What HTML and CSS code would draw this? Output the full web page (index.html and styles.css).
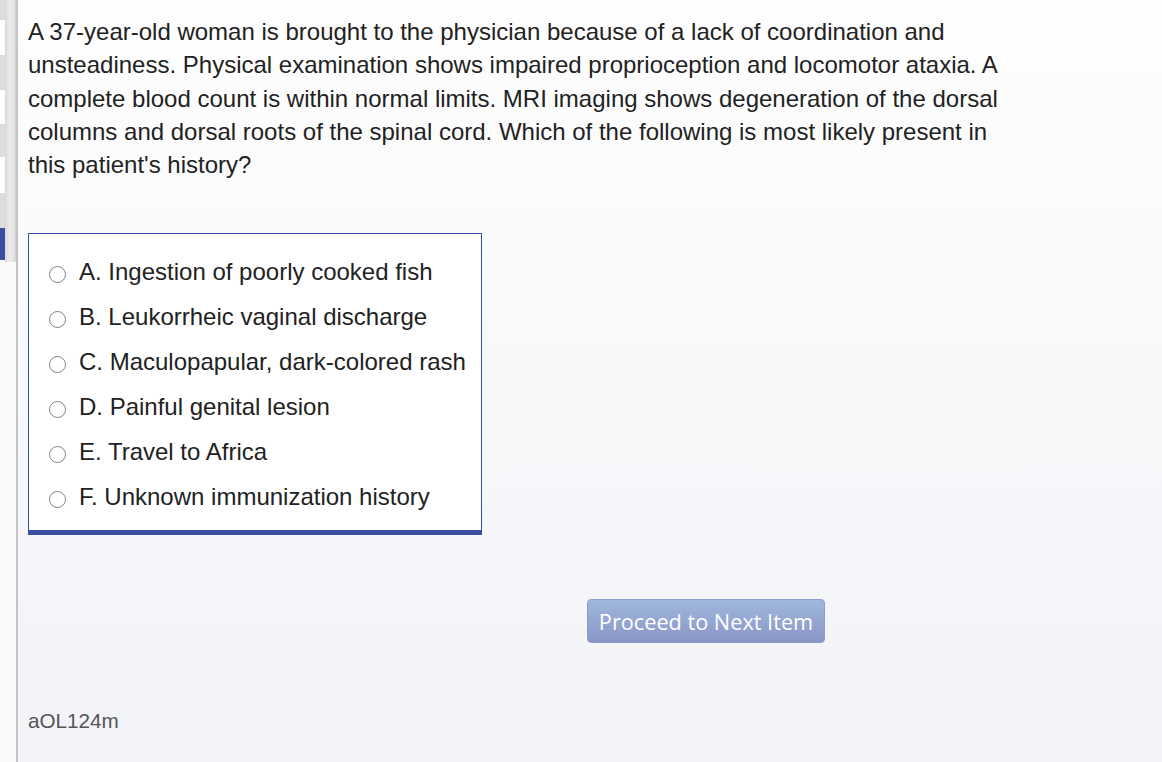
FILE: index.html
```html
<!DOCTYPE html>
<html>
<head>
<meta charset="utf-8">
<link rel="stylesheet" href="styles.css">
</head>
<body>
<div class="app">
  <aside class="sidebar">
    <div class="rows">
      <div class="row gray h20"></div>
      <div class="row white h35"></div>
      <div class="row gray h35"></div>
      <div class="row white h34"></div>
      <div class="row gray h33"></div>
      <div class="row white h36"></div>
      <div class="row gray h35"></div>
      <div class="row active h32"></div>
    </div>
    <div class="scrollbar"></div>
  </aside>
  <main class="main">
    <p class="question">A 37-year-old woman is brought to the physician because of a lack of coordination and unsteadiness. Physical examination shows impaired proprioception and locomotor ataxia. A complete blood count is within normal limits. MRI imaging shows degeneration of the dorsal columns and dorsal roots of the spinal cord. Which of the following is most likely present in this patient's history?</p>
    <div class="answers">
      <label class="option"><span class="radio"></span><span class="opt-text">A. Ingestion of poorly cooked fish</span></label>
      <label class="option"><span class="radio"></span><span class="opt-text">B. Leukorrheic vaginal discharge</span></label>
      <label class="option"><span class="radio"></span><span class="opt-text">C. Maculopapular, dark-colored rash</span></label>
      <label class="option"><span class="radio"></span><span class="opt-text">D. Painful genital lesion</span></label>
      <label class="option"><span class="radio"></span><span class="opt-text">E. Travel to Africa</span></label>
      <label class="option"><span class="radio"></span><span class="opt-text">F. Unknown immunization history</span></label>
    </div>
    <div class="actions">
      <button class="next-btn">Proceed to Next Item</button>
    </div>
    <div class="item-id">aOL124m</div>
  </main>
</div>
</body>
</html>
```
FILE: styles.css
```css
html, body {
  margin: 0;
  padding: 0;
  height: 100%;
}
body {
  font-family: "Liberation Sans", Arial, sans-serif;
  color: #222;
  overflow: hidden;
}
.app {
  display: flex;
  height: 762px;
}
.sidebar {
  width: 16px;
  flex: none;
  display: flex;
  background: #fafafa;
  border-right: 2px solid #c4c4c4;
  box-sizing: content-box;
}
.rows {
  width: 5px;
  display: flex;
  flex-direction: column;
}
.row { width: 5px; }
.gray { background: #dcdcdc; }
.white { background: #ffffff; }
.active { background: #3a4da0; }
.h20 { height: 20px; }
.h32 { height: 32px; }
.h33 { height: 33px; }
.h34 { height: 34px; }
.h35 { height: 35px; }
.h36 { height: 36px; }
.scrollbar {
  width: 11px;
  height: 262px;
  background: linear-gradient(to right, #d8d8d8, #ececec 40%, #e4e4e4 80%, #d0d0d0);
}
.main {
  flex: 1;
  background: linear-gradient(to bottom, #fefefe 0%, #f2f3f7 100%);
  padding: 15px 0 0 10px;
  display: flex;
  flex-direction: column;
}
.question {
  margin: 0;
  width: 980px;
  font-size: 24px;
  line-height: 33.3px;
  color: #222;
}
.answers {
  margin-top: 52px;
  width: 452px;
  background: #fff;
  border: 1px solid #3a4da0;
  border-bottom: 5px solid #3a4da0;
  padding: 15px 0 11px 0;
  display: flex;
  flex-direction: column;
}
.option {
  display: flex;
  align-items: center;
  height: 45px;
  padding-left: 20px;
  font-size: 24px;
}
.radio {
  width: 15px;
  height: 15px;
  border: 1.5px solid #808080;
  border-radius: 50%;
  background: #fff;
  margin-right: 13px;
  margin-top: 5px;
  flex: none;
}
.opt-text {
  color: #222;
}
.actions {
  margin-top: 64px;
  padding-left: 559px;
  display: flex;
}
.next-btn {
  width: 238px;
  height: 44px;
  border: 1px solid #8c9dcc;
  border-radius: 4px;
  background: linear-gradient(to bottom, #9fb8de, #8a95c6);
  color: #fff;
  font-family: "Open Sans", sans-serif;
  font-size: 21.7px;
  padding: 0;
}
.item-id {
  margin-top: 66px;
  font-size: 20.7px;
  color: #555;
}
```
